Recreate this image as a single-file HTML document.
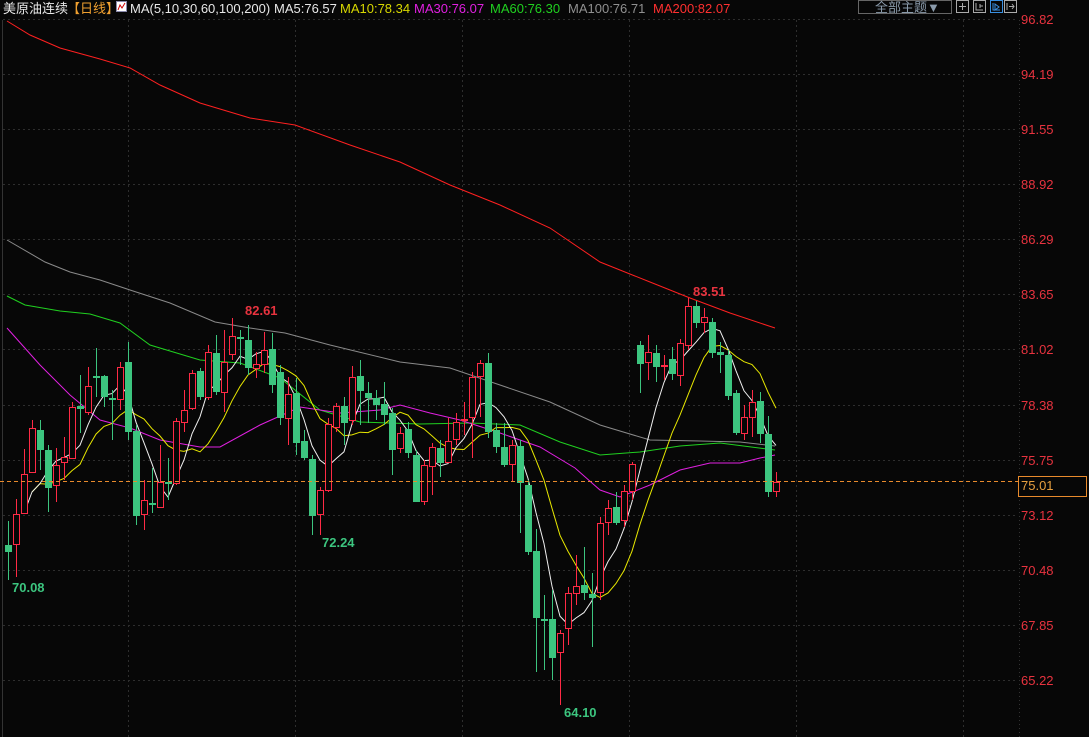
<!DOCTYPE html>
<html><head><meta charset="utf-8"><style>
html,body{margin:0;padding:0;background:#070707;width:1089px;height:737px;overflow:hidden;font-family:"Liberation Sans","Noto Sans CJK SC",sans-serif}
svg{position:absolute;left:0;top:0}
.t{font-family:"Liberation Sans","Noto Sans CJK SC",sans-serif;font-size:13px}
</style></head><body>
<svg id="s" width="1089" height="737" xmlns="http://www.w3.org/2000/svg">
<g id="grid" stroke="#2e2e2e" stroke-dasharray="2,3" stroke-width="1"></g>
<line x1="2.5" y1="20" x2="2.5" y2="737" stroke="#333"/>
<line x1="1019.5" y1="20" x2="1019.5" y2="737" stroke="#333" stroke-dasharray="1,3"/>
<g id="mas" fill="none" stroke-width="1"></g>
<g id="c"></g>
<line x1="0" y1="481.5" x2="1018" y2="481.5" stroke="#e88a2c" stroke-dasharray="4,3"/>
<rect x="1018.5" y="476.5" width="68" height="20" fill="#070707" stroke="#e88a2c"/>
<text x="1021" y="490" class="t" fill="#e8a040">75.01</text>
<g id="ax" class="t" fill="#e8333f"></g>
<text x="12" y="592" class="t" fill="#3cc57f" font-size="12" font-weight="bold">70.08</text>
<text x="322" y="547" class="t" fill="#3cc57f" font-size="12" font-weight="bold">72.24</text>
<text x="245" y="315" class="t" fill="#e8333f" font-size="12" font-weight="bold">82.61</text>
<text x="693" y="296" class="t" fill="#e8333f" font-size="12" font-weight="bold">83.51</text>
<text x="564" y="717" class="t" fill="#3cc57f" font-size="12" font-weight="bold">64.10</text>
<text x="3" y="13" class="t" fill="#e8e8e8" font-size="13">美原油连续</text>
<text x="67" y="13" class="t" fill="#f0a030" font-size="13">【日线】</text>
<rect x="116.5" y="1.5" width="10" height="10" fill="#fff" stroke="#88a"/>
<path d="M118 10 L120 5 L122 8 L125 3" stroke="#c00" fill="none"/>
<text x="130" y="13" class="t" fill="#e8e8e8">MA(5,10,30,60,100,200)</text>
<text x="274" y="13" class="t" fill="#e8e8e8">MA5:76.57</text>
<text x="340" y="13" class="t" fill="#d8d800">MA10:78.34</text>
<text x="414" y="13" class="t" fill="#e020e0">MA30:76.07</text>
<text x="490" y="13" class="t" fill="#20d020">MA60:76.30</text>
<text x="568" y="13" class="t" fill="#909090">MA100:76.71</text>
<text x="653" y="13" class="t" fill="#ff3030">MA200:82.07</text>
<rect x="858.5" y="0.5" width="93" height="13" fill="none" stroke="#666"/>
<text x="875" y="12" class="t" fill="#8a9aaa" font-size="12">全部主题▼</text>
<g fill="none" stroke="#aaa">
<rect x="956.5" y="0.5" width="12" height="12"/><rect x="973.5" y="0.5" width="12" height="12"/>
<rect x="990.5" y="0.5" width="12" height="12" stroke="#3a8fe0"/><rect x="1004.5" y="0.5" width="12" height="12"/>
<path d="M962.5 3v7M959 6.5h7"/><path d="M976 3v7h7M980 4v4M980 6h3"/>
<path d="M993 3v7h7M995 4l4 3-4 3z" stroke="#3a8fe0"/><path d="M1007 3v7M1009 6.5h5M1012 4l2 2.5-2 2.5"/>
</g>
</svg>
<script>
var NS="http://www.w3.org/2000/svg";
function el(p,n,a){var e=document.createElementNS(NS,n);for(var k in a)e.setAttribute(k,a[k]);document.getElementById(p).appendChild(e);return e;}
var labels=["96.82","94.19","91.55","88.92","86.29","83.65","81.02","78.38","75.75","73.12","70.48","67.85","65.22"];
for(var i=0;i<13;i++){var y=19+i*55.08;el("grid","line",{x1:3,y1:Math.round(y)+0.5,x2:1018,y2:Math.round(y)+0.5});
var t=el("ax","text",{x:1021,y:Math.round(y)+5});t.textContent=labels[i];}
[128,295,462,629,796,963].forEach(function(x){el("grid","line",{x1:x+0.5,y1:20,x2:x+0.5,y2:737});});
// [top,bottom,high,low,color]
var C=[
[545,552,521,580,'g'],[514,544,499,577,'r'],[474,513,449,513,'r'],[428,472,420,472,'r'],[430,450,420,470,'g'],
[450,488,445,512,'g'],[465,485,448,502,'r'],[457,462,437,480,'r'],[407,458,402,458,'r'],[406,409,375,433,'g'],
[386,412,367,415,'r'],[376,377,348,397,'g'],[376,397,375,407,'g'],[398,399,390,440,'g'],[367,399,362,410,'r'],
[362,432,342,440,'g'],[431,516,425,525,'g'],[500,514,480,530,'r'],[503,504,468,513,'g'],[482,507,445,507,'r'],
[482,483,458,500,'g'],[421,483,418,485,'r'],[410,422,390,432,'r'],[373,408,370,410,'r'],[371,397,368,400,'g'],
[352,397,345,400,'r'],[353,392,335,395,'g'],[362,392,330,412,'r'],[336,354,318,360,'r'],[337,339,330,365,'g'],
[340,368,325,375,'g'],[364,368,352,378,'r'],[350,364,332,373,'r'],[349,385,333,393,'g'],[372,418,365,425,'g'],
[394,418,377,445,'r'],[393,443,378,455,'g'],[441,458,430,460,'g'],[459,516,455,535,'g'],[490,514,487,535,'r'],
[424,490,418,492,'r'],[406,427,403,432,'r'],[406,423,397,445,'g'],[377,420,366,425,'r'],[376,391,360,425,'g'],
[393,398,382,423,'g'],[398,405,390,420,'g'],[404,415,382,425,'g'],[413,450,408,475,'g'],[433,448,427,453,'r'],
[429,453,422,458,'g'],[455,502,450,502,'g'],[465,501,460,505,'r'],[447,466,443,495,'r'],[448,463,440,477,'g'],
[441,462,418,463,'r'],[422,439,413,445,'r'],[419,420,402,435,'r'],[377,417,372,458,'r'],[363,376,360,417,'r'],
[363,432,353,438,'g'],[430,447,423,453,'g'],[447,465,423,467,'g'],[445,464,440,482,'r'],[446,483,440,533,'g'],
[485,552,480,555,'g'],[551,618,529,672,'g'],[619,620,595,670,'g'],[619,658,590,680,'g'],[633,652,630,705,'r'],
[593,628,587,645,'r'],[586,593,555,605,'r'],[585,593,547,600,'g'],[594,598,573,647,'g'],[523,592,517,600,'r'],
[508,522,500,535,'r'],[507,523,492,525,'g'],[491,520,485,527,'r'],[464,491,462,500,'r'],[345,364,341,393,'g'],
[352,362,335,380,'r'],[353,367,345,382,'g'],[365,366,355,380,'r'],[359,374,347,380,'g'],[343,375,339,386,'r'],
[306,345,298,350,'r'],[306,323,301,328,'g'],[317,322,308,333,'r'],[322,353,318,358,'g'],[352,355,342,373,'g'],
[355,396,350,400,'g'],[393,433,390,435,'g'],[417,433,405,440,'r'],[402,417,390,437,'r'],[401,434,392,443,'g'],
[434,492,416,497,'g'],[482,491,472,497,'r']];
var closes=[];
C.forEach(function(c,i){var x=8+i*8;var col=c[4]=='r'?'#ff2a45':'#3cc57f';
el("c","line",{x1:x+0.5,y1:c[2],x2:x+0.5,y2:c[3],stroke:col});
if(c[4]=='r')el("c","rect",{x:x-2.5,y:c[0]+0.5,width:6,height:Math.max(1,c[1]-c[0]),fill:'#070707',stroke:col});
else el("c","rect",{x:x-3,y:c[0],width:7,height:Math.max(2,c[1]-c[0]),fill:col});
closes.push(c[4]=='r'?c[0]:c[1]);});
closes[0]=552;
function ma(n,start,col){var pts=[];for(var i=start;i<closes.length;i++){var s=0,k=0;for(var j=Math.max(0,i-n+1);j<=i;j++){s+=closes[j];k++;}pts.push((8+i*8)+","+(s/k).toFixed(1));}
el("mas","polyline",{points:pts.join(" "),stroke:col});}
function pl(p,col){el("mas","polyline",{points:p,stroke:col});}
pl("7,21 30,35 60,48 100,59 130,68 160,85 200,103 250,118 295,125 350,145 400,162 450,185 500,205 550,228 600,262 650,282 690,298 730,313 775,328","#ff2020");
pl("7,240 45,262 70,272 100,280 130,290 170,303 215,322 250,328 285,333 330,345 400,362 450,368 500,385 550,402 600,425 650,440 700,441 740,442 775,446","#8a8a8a");
pl("7,296 25,305 60,311 90,314 120,323 150,345 200,360 240,363 280,378 320,410 360,422 420,424 470,423 520,425 560,442 600,455 640,452 680,446 720,443 775,450","#20d020");
pl("7,328 40,365 70,395 100,420 130,428 160,440 200,447 220,447 260,425 300,407 340,413 380,410 400,405 430,413 460,420 500,433 540,447 575,468 600,490 620,497 650,485 680,470 710,463 740,463 760,458 775,455","#e020e0");
ma(10,3,"#e8e800");ma(5,2,"#f0f0f0");
</script>
</body></html>
